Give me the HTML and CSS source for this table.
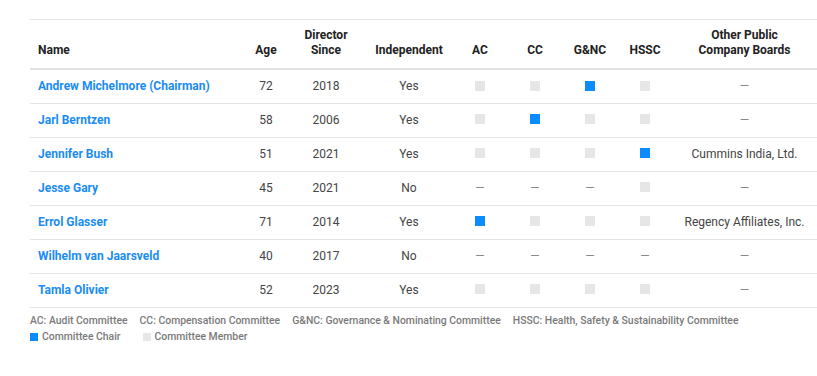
FILE: index.html
```html
<!DOCTYPE html>
<html lang="en">
<head>
<meta charset="utf-8">
<title>Board of Directors</title>
<link rel="stylesheet" href="styles.css">
</head>
<body>
<div class="wrap">
  <table class="board">
    <colgroup>
      <col class="c-name"><col class="c-age"><col class="c-since"><col class="c-ind">
      <col class="c-com"><col class="c-com2"><col class="c-com"><col class="c-com2"><col class="c-other">
    </colgroup>
    <thead>
      <tr>
        <th class="left">Name</th>
        <th>Age</th>
        <th>Director<br>Since</th>
        <th>Independent</th>
        <th>AC</th>
        <th>CC</th>
        <th>G&amp;NC</th>
        <th>HSSC</th>
        <th>Other Public<br>Company Boards</th>
      </tr>
    </thead>
    <tbody>
      <tr>
        <td class="left"><a class="name" href="#">Andrew Michelmore (Chairman)</a></td>
        <td>72</td><td>2018</td><td>Yes</td>
        <td><span class="sq"></span></td><td><span class="sq"></span></td><td><span class="sq chair"></span></td><td><span class="sq"></span></td>
        <td><span class="dash">—</span></td>
      </tr>
      <tr>
        <td class="left"><a class="name" href="#">Jarl Berntzen</a></td>
        <td>58</td><td>2006</td><td>Yes</td>
        <td><span class="sq"></span></td><td><span class="sq chair"></span></td><td><span class="sq"></span></td><td><span class="sq"></span></td>
        <td><span class="dash">—</span></td>
      </tr>
      <tr>
        <td class="left"><a class="name" href="#">Jennifer Bush</a></td>
        <td>51</td><td>2021</td><td>Yes</td>
        <td><span class="sq"></span></td><td><span class="sq"></span></td><td><span class="sq"></span></td><td><span class="sq chair"></span></td>
        <td>Cummins India, Ltd.</td>
      </tr>
      <tr>
        <td class="left"><a class="name" href="#">Jesse Gary</a></td>
        <td>45</td><td>2021</td><td>No</td>
        <td><span class="dash">—</span></td><td><span class="dash">—</span></td><td><span class="dash">—</span></td><td><span class="sq"></span></td>
        <td><span class="dash">—</span></td>
      </tr>
      <tr>
        <td class="left"><a class="name" href="#">Errol Glasser</a></td>
        <td>71</td><td>2014</td><td>Yes</td>
        <td><span class="sq chair"></span></td><td><span class="sq"></span></td><td><span class="sq"></span></td><td><span class="sq"></span></td>
        <td>Regency Affiliates, Inc.</td>
      </tr>
      <tr>
        <td class="left"><a class="name" href="#">Wilhelm van Jaarsveld</a></td>
        <td>40</td><td>2017</td><td>No</td>
        <td><span class="dash">—</span></td><td><span class="dash">—</span></td><td><span class="dash">—</span></td><td><span class="dash">—</span></td>
        <td><span class="dash">—</span></td>
      </tr>
      <tr>
        <td class="left"><a class="name" href="#">Tamla Olivier</a></td>
        <td>52</td><td>2023</td><td>Yes</td>
        <td><span class="sq"></span></td><td><span class="sq"></span></td><td><span class="sq"></span></td><td><span class="sq"></span></td>
        <td><span class="dash">—</span></td>
      </tr>
    </tbody>
  </table>
  <div class="legend">
    <div class="legend-row">
      <span>AC: Audit Committee</span>
      <span>CC: Compensation Committee</span>
      <span>G&amp;NC: Governance &amp; Nominating Committee</span>
      <span>HSSC: Health, Safety &amp; Sustainability Committee</span>
    </div>
    <div class="legend-row">
      <span class="key"><span class="lsq chair"></span>Committee Chair</span>
      <span class="key"><span class="lsq"></span>Committee Member</span>
    </div>
  </div>
</div>
</body>
</html>
```
FILE: styles.css
```css
* { box-sizing: border-box; }
html, body { margin: 0; padding: 0; background: #fff; overflow: hidden; }
body {
  font-family: Roboto, "Liberation Sans", sans-serif;
  color: #444;
  font-size: 12px;
}
.wrap {
  padding: 19px 0 0 30px;
}
.board {
  width: 787px;
  border-collapse: collapse;
  table-layout: fixed;
  border-top: 1px solid #e4e4e4;
}
.c-name { width: 216px; }
.c-age { width: 40px; }
.c-since { width: 80px; }
.c-ind { width: 86px; }
.c-com { width: 56px; }
.c-com2 { width: 54px; }
.c-other { width: 145px; }

.board th {
  font-weight: 700;
  color: #222;
  font-size: 12px;
  line-height: 15px;
  text-align: center;
  vertical-align: bottom;
  padding: 8px 0 10px;
  height: 47px;
  border-bottom: 2px solid #e2e2e2;
}
.board td {
  text-align: center;
  vertical-align: middle;
  height: 34px;
  padding: 0;
  line-height: 15px;
  border-bottom: 1px solid #e4e4e4;
}
.board .left { text-align: left; padding-left: 8px; }
.name {
  color: #1a8cf5;
  font-weight: 700;
  text-decoration: none;
}
.sq {
  display: inline-block;
  width: 10px;
  height: 10px;
  background: #e6e6e6;
  vertical-align: middle;
  margin-top: -2px;
}
.sq.chair { background: #0a8cff; }
.dash { color: #888; }

.legend {
  padding-top: 5px;
  color: #7a7a7a;
  font-size: 10.4px;
  font-weight: 500;
  line-height: 16px;
}
.legend-row {
  display: flex;
  gap: 12px;
}
.legend-row .key {
  display: inline-flex;
  align-items: center;
  margin-right: 10px;
}
.lsq {
  display: inline-block;
  width: 8px;
  height: 8px;
  background: #e6e6e6;
  margin-right: 4px;
}
.lsq.chair { background: #0a8cff; }
```
